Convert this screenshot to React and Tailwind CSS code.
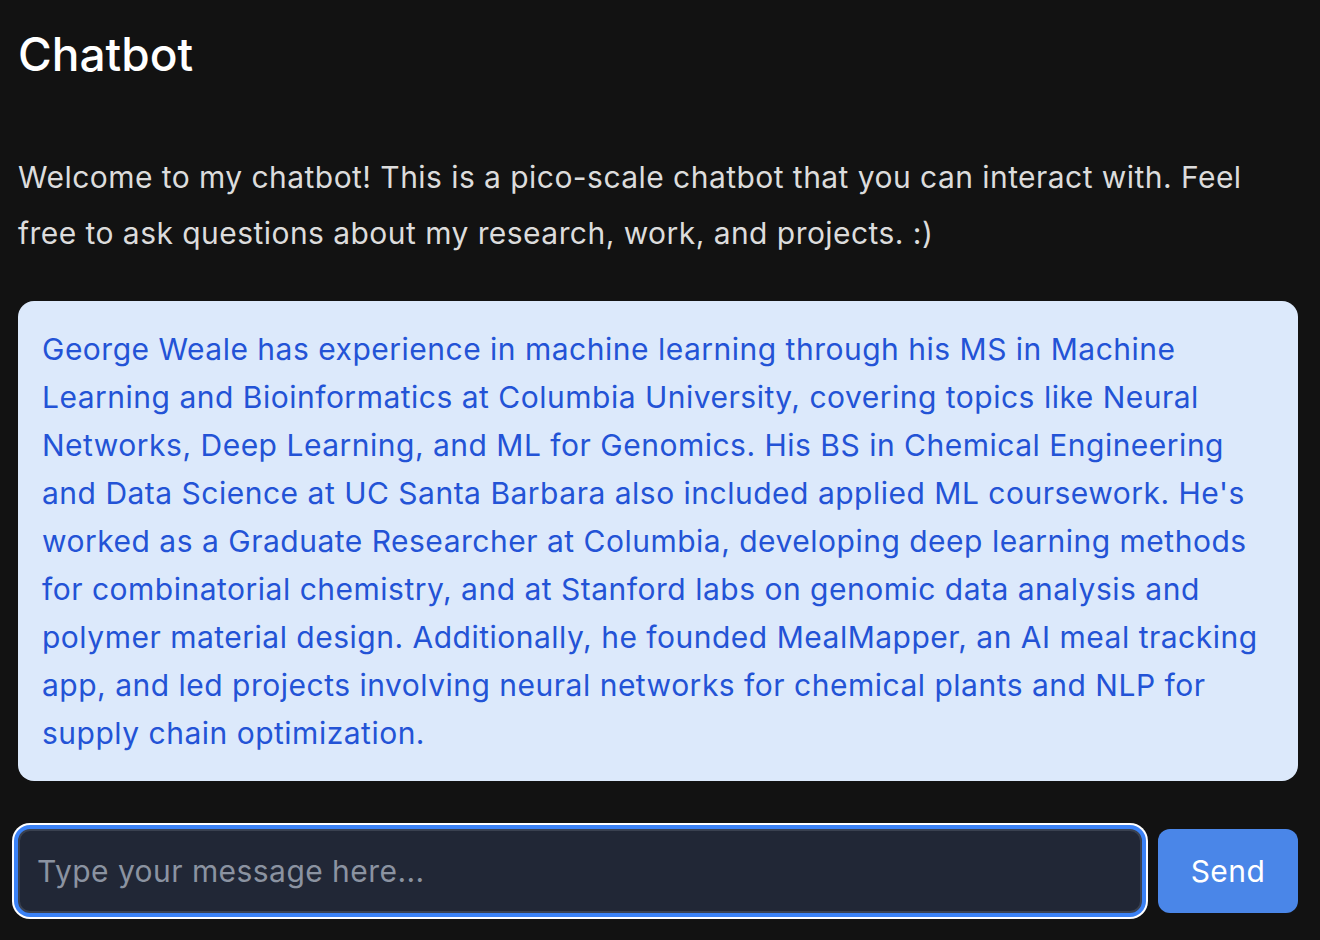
import React, { useState } from 'react';

const ANSWER =
  "George Weale has experience in machine learning through his MS in Machine Learning and Bioinformatics at Columbia University, covering topics like Neural Networks, Deep Learning, and ML for Genomics. His BS in Chemical Engineering and Data Science at UC Santa Barbara also included applied ML coursework. He's worked as a Graduate Researcher at Columbia, developing deep learning methods for combinatorial chemistry, and at Stanford labs on genomic data analysis and polymer material design. Additionally, he founded MealMapper, an AI meal tracking app, and led projects involving neural networks for chemical plants and NLP for supply chain optimization.";

export default function App() {
  const [msg, setMsg] = useState('');

  return (
    <div className="min-h-screen bg-[#121212] pl-[18px] pr-[22px] pt-[22px] font-['Inter','Liberation_Sans',sans-serif]">
      <h1 className="text-[46px] leading-[64px] font-medium text-white">Chatbot</h1>

      <p className="mt-[63px] text-[30px] leading-[56px] tracking-[0.45px] text-[#dcdcdc]">
        Welcome to my chatbot! This is a pico-scale chatbot that you can interact with. Feel free to ask questions about my research, work, and projects. :)
      </p>

      {/* answer bubble */}
      <div className="mt-[40px] rounded-2xl bg-[#dce9fb] px-6 py-6">
        <p className="text-[30px] leading-[48px] tracking-[0.5px] text-[#2353d6]">{ANSWER}</p>
      </div>

      <div className="mt-12 flex gap-4">
        <input
          autoFocus
          value={msg}
          onChange={e => setMsg(e.target.value)}
          placeholder="Type your message here..."
          className="h-[84px] flex-1 rounded-xl border-2 border-[#3a4150] bg-[#212736] px-[17px] text-[30px] tracking-[0.45px] text-white placeholder:text-[#8b93a1] outline-none shadow-[0_0_0_4px_#3b82f6,0_0_0_6px_#ffffff]"
        />
        <button className="h-[84px] w-[140px] rounded-xl bg-[#4a86e8] text-[30px] tracking-[0.45px] text-white">Send</button>
      </div>
    </div>
  );
}
